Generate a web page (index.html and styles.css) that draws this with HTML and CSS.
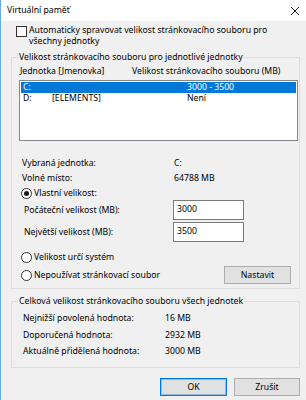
FILE: index.html
```html
<!DOCTYPE html>
<html lang="cs">
<head>
    <meta charset="UTF-8">
    <meta name="viewport" content="width=device-width, initial-scale=1.0">
    <title>Virtuální paměť</title>
    <link rel="stylesheet" href="styles.css">
</head>
<body>
    <div class="window">
        <div class="title-bar">
            <span class="title">Virtuální paměť</span>
            <svg class="close-icon" width="10" height="10" viewBox="0 0 10 10">
                <path d="M1 1L9 9M9 1L1 9" stroke="#1a1a1a" stroke-width="1" fill="none"/>
            </svg>
        </div>

        <div class="content">
            <div class="auto-row">
                <span class="checkbox"></span>
                <span>Automaticky spravovat velikost stránkovacího souboru pro<br>všechny jednotky</span>
            </div>

            <fieldset class="group group-drives">
                <legend>Velikost stránkovacího souboru pro jednotlivé jednotky</legend>
                <div class="list-header">
                    <span class="col-drive">Jednotka [Jmenovka]</span>
                    <span>Velikost stránkovacího souboru (MB)</span>
                </div>
                <div class="list-box">
                    <div class="list-row selected">
                        <span class="col-letter">C:</span><span class="col-name"></span><span>3000 - 3500</span>
                    </div>
                    <div class="list-row">
                        <span class="col-letter">D:</span><span class="col-name">[ELEMENTS]</span><span>Není</span>
                    </div>
                </div>

                <div class="info-row first">
                    <span class="info-label">Vybraná jednotka:</span><span>C:</span>
                </div>
                <div class="info-row">
                    <span class="info-label">Volné místo:</span><span>64788 MB</span>
                </div>

                <div class="radio-row custom"><span class="radio checked"></span>Vlastní velikost:</div>
                <div class="field-row">
                    <span class="field-label">Počáteční velikost (MB):</span>
                    <input type="text" class="text-box" value="3000">
                </div>
                <div class="field-row second">
                    <span class="field-label">Největší velikost (MB):</span>
                    <input type="text" class="text-box" value="3500">
                </div>
                <div class="radio-row system"><span class="radio"></span>Velikost určí systém</div>
                <div class="radio-row none">
                    <span class="radio"></span>Nepoužívat stránkovací soubor
                    <button class="btn btn-set">Nastavit</button>
                </div>
            </fieldset>

            <fieldset class="group group-totals">
                <legend>Celková velikost stránkovacího souboru všech jednotek</legend>
                <div class="total-row"><span class="total-label">Nejnižší povolená hodnota:</span><span>16 MB</span></div>
                <div class="total-row"><span class="total-label">Doporučená hodnota:</span><span>2932 MB</span></div>
                <div class="total-row"><span class="total-label">Aktuálně přidělená hodnota:</span><span>3000 MB</span></div>
            </fieldset>

            <div class="dialog-buttons">
                <button class="btn btn-ok">OK</button>
                <button class="btn btn-cancel">Zrušit</button>
            </div>
        </div>
    </div>
</body>
</html>
```

FILE: styles.css
```css
html, body {
    margin: 0;
    padding: 0;
    background: #f0f0f0;
}

body {
    font-family: 'Noto Sans', 'Open Sans', sans-serif;
    font-size: 8.7px;
    line-height: 11px;
    color: #000;
}

.window {
    width: 306px;
    height: 400px;
    box-sizing: border-box;
    border-left: 1px solid #6aa9e4;
    background: #f0f0f0;
    overflow: hidden;
}

.title-bar {
    height: 21px;
    background: #fff;
    display: flex;
    justify-content: space-between;
    align-items: center;
    padding: 0 6px 0 6px;
}

.close-icon {
    display: block;
}

.content {
    padding: 0 6px 0 10px;
}

.auto-row {
    display: flex;
    margin-top: 4px;
    height: 22px;
}

.checkbox {
    width: 11px;
    height: 11px;
    box-sizing: border-box;
    border: 1px solid #333;
    background: #fff;
    margin: 1px 2px 0 5px;
    flex-shrink: 0;
}

.group {
    margin: 0;
    padding: 0;
    min-width: 0;
    border: 1px solid #dcdcdc;
}

.group legend {
    margin-left: 6px;
    padding: 0 1px;
    line-height: 11px;
}

.group-drives {
    margin-top: 5px;
    padding-bottom: 4px;
}

.list-header {
    display: flex;
    height: 16px;
    line-height: 16px;
    padding-left: 8px;
}

.col-drive {
    width: 112px;
}

.list-box {
    margin: 1px 0 0 7px;
    width: 279px;
    height: 61px;
    box-sizing: border-box;
    border: 1px solid #828790;
    background: #fff;
    padding: 1px;
}

.list-row {
    display: flex;
    height: 11px;
    line-height: 11px;
    padding-left: 2px;
}

.list-row.selected {
    background: #0078d7;
    color: #fff;
}

.col-letter {
    width: 29px;
}

.col-name {
    width: 135px;
}

.info-row {
    display: flex;
    height: 15px;
    line-height: 15px;
    padding-left: 10px;
}

.info-row.first {
    margin-top: 15px;
}

.info-label {
    width: 152px;
}

.radio-row {
    display: flex;
    align-items: center;
}

.radio-row.custom {
    height: 14px;
}

.radio-row.system {
    height: 14px;
    margin-top: 8px;
}

.radio-row.none {
    height: 18px;
    margin-top: 2px;
}

.radio {
    width: 11px;
    height: 11px;
    box-sizing: border-box;
    border: 1px solid #333;
    border-radius: 50%;
    background: #fff;
    margin: 0 2px 0 9px;
    display: flex;
    justify-content: center;
    align-items: center;
    flex-shrink: 0;
}

.radio.checked::after {
    content: '';
    width: 5px;
    height: 5px;
    border-radius: 50%;
    background: #1a1a1a;
}

.field-row {
    display: flex;
    align-items: center;
    height: 20px;
}

.field-row.second {
    margin-top: 2px;
}

.field-label {
    width: 149px;
    padding-left: 12px;
}

.text-box {
    width: 71px;
    height: 20px;
    box-sizing: border-box;
    border: 1px solid #7a7a7a;
    background: #fff;
    padding: 0 0 3px 3px;
    margin: 0;
    font: inherit;
    color: #000;
    outline: none;
}

.btn {
    font: inherit;
    color: #000;
    height: 18px;
    padding: 0;
    margin: 0;
    background: #e1e1e1;
    border: 1px solid #adadad;
}

.btn-set {
    width: 67px;
    margin-left: auto;
    margin-right: 8px;
}

.group-totals {
    margin-top: 7px;
    padding: 3px 0 7.5px 0;
}

.total-row {
    display: flex;
    height: 16.5px;
    line-height: 16.5px;
    padding-left: 11px;
}

.total-label {
    width: 142px;
}

.dialog-buttons {
    display: flex;
    justify-content: flex-end;
    gap: 7px;
    margin-top: 10px;
}

.btn-ok {
    width: 67px;
    border-color: #0078d7;
    box-shadow: inset 0 0 0 1px rgba(0, 120, 215, 0.35);
}

.btn-cancel {
    width: 66px;
}
```
